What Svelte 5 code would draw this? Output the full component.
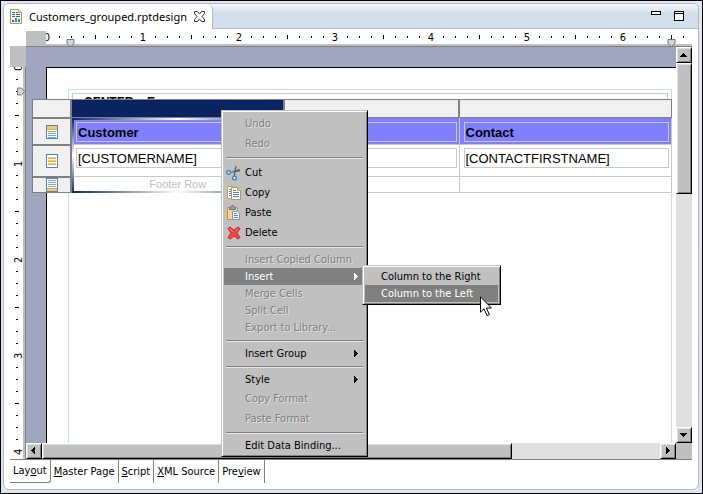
<script>
  let scaleWidth = $state(0);
  let scaleHeight = $state(0);

  // Eight ticks of 12px make one inch.
  const ticks = (length) =>
    Array.from({ length: Math.floor(length / 12) }, (_, i) => ({
      label: i % 8 === 0 ? String(i / 8) : '',
      half: i % 8 === 4
    }));

  const across = $derived(ticks(scaleWidth));
  const down = $derived(ticks(scaleHeight));

  const menu = [
    { text: 'Undo', off: true, tall: true },
    { text: 'Redo', off: true, tall: true },
    null,
    { text: 'Cut', icon: 'cut', tall: true },
    { text: 'Copy', icon: 'copy', tall: true },
    { text: 'Paste', icon: 'paste', tall: true },
    { text: 'Delete', icon: 'delete', tall: true },
    null,
    { text: 'Insert Copied Column', off: true },
    { text: 'Insert', sub: true, active: true },
    { text: 'Merge Cells', off: true },
    { text: 'Split Cell', off: true },
    { text: 'Export to Library...', off: true },
    null,
    { text: 'Insert Group', sub: true },
    null,
    { text: 'Style', sub: true },
    { text: 'Copy Format', off: true, tall: true },
    { text: 'Paste Format', off: true, tall: true },
    null,
    { text: 'Edit Data Binding...' }
  ];

  const views = [
    ['Lay', 'o', 'ut'],
    ['', 'M', 'aster Page'],
    ['', 'S', 'cript'],
    ['', 'X', 'ML Source'],
    ['Pre', 'v', 'iew']
  ];
  let view = $state(0);
</script>

{#snippet arrow(d)}
  <svg width="8" height="8" viewBox="0 0 8 8" shape-rendering="crispEdges" aria-hidden="true"><path {d} /></svg>
{/snippet}

{#snippet rowIcon(kind)}
  <svg width="12" height="14" viewBox="0 0 12 14" shape-rendering="crispEdges" aria-hidden="true">
    <rect x="0.5" y="0.5" width="11" height="13" fill="#fff" stroke="#4a87c4" />
    {#if kind === 'header'}
      <path d="M1 1h10v3H1z" fill="#ffc864" /><path d="M1 4.5h10" stroke="#e8a030" />
      <path d="M2 6.500h8M2 8.500h8M2 10.500h8M2 12.500h8" stroke="#7ca8cc" />
    {:else if kind === 'detail'}
      <path d="M2 3h8v2H2zM2 6h8v2H2zM2 9h8v2H2z" fill="#ffc864" />
      <path d="M2 4.500h8M2 7.500h8M2 10.500h8" stroke="#f0a838" />
    {:else}
      <path d="M2 2.500h8M2 4.500h8M2 6.500h8M2 8.500h8" stroke="#7ca8cc" />
      <path d="M1 10h10v3H1z" fill="#ffc864" /><path d="M1 10.500h10" stroke="#e8a030" />
    {/if}
  </svg>
{/snippet}

{#snippet menuIcon(name)}
  <svg width="16" height="16" viewBox="0 0 16 16" aria-hidden="true">
    {#if name === 'cut'}
      <path d="M10 1L8.500 8.500M9 8l-1 3M13.500 4.500L5 7.500M8.500 6.500L14 5.500" fill="none" stroke="#51677c" stroke-width="1.300" />
      <circle cx="2.500" cy="7.500" r="1.800" fill="#d6e8f8" stroke="#2f78b7" stroke-width="1.200" />
      <circle cx="8.500" cy="13" r="1.900" fill="#d6e8f8" stroke="#2f78b7" stroke-width="1.200" />
    {:else if name === 'copy'}
      <path d="M1.500 1.500h5l2 2v10h-7z" fill="#fff" stroke="#c8a24c" />
      <path d="M3 4.500h2M3 6.500h2M3 8.500h2M3 10.500h2" stroke="#5580b8" />
      <path d="M5.500 2.500h6l3 3v9h-9z" fill="#fff" stroke="#a89a60" />
      <path d="M11.500 2.500v3h3" fill="#f4dc94" stroke="#c8a24c" />
      <path d="M7 5.500h3M7 7.500h6M7 9.500h6M7 11.500h6" stroke="#5580b8" />
    {:else if name === 'paste'}
      <path d="M1.500 2.500h10v12h-10z" fill="#fbd692" stroke="#c89040" />
      <path d="M3.500 4.500v-1.500l1.500-1 1-1.500h1l1 1.500 1.500 1v1.500z" fill="#8fa0b4" stroke="#60748c" />
      <path d="M6.500 6.500h5l2 2v6h-7z" fill="#fff" stroke="#7c94b4" />
      <path d="M8 8.500h3M8 10.500h4M8 12.500h4" stroke="#5580b8" />
    {:else}
      <path d="M2 3.500L4 2l4 3 4-3 2 1.500L11 8l3 4.500L12 14l-4-3-4 3-2-1.500L5 8z" fill="#ee4448" stroke="#c82838" />
      <path d="M4 4l3 3M12 4l-2 2" stroke="#ff9890" fill="none" />
    {/if}
  </svg>
{/snippet}

<main class="window">
  <section class="editor">
    <header class="tabs">
      <div class="tab">
        <svg class="file" width="12" height="15" viewBox="0 0 12 15" aria-hidden="true">
          <path d="M.5.5h8l3 3v11H.5z" fill="#f8fbff" stroke="#b09858" />
          <path d="M8.500.5v3h3" fill="#f6dc9c" stroke="#c8a050" />
          <path d="M2 3.500h3M6 3.500h2M2 5.500h3M6 5.500h4M2 7.500h3M6 7.500h4" stroke="#28649c" />
          <path d="M2 11h2v2H2z" fill="#e82020" /><path d="M5 9h2v4H5z" fill="#2090e0" /><path d="M8 10h2v3H8z" fill="#20a050" />
        </svg>
        <h1>Customers_grouped.rptdesign</h1>
        <button class="close" aria-label="Close">
          <svg width="11" height="11" viewBox="0 0 11 11" aria-hidden="true">
            <path d="M.5.5h3l2 2.500 2-2.500h3v2L8 5.500l2.500 3v2h-3l-2-2.500-2 2.500h-3v-2L3 5.500.5 2.500z" fill="#fff" stroke="#333" />
          </svg>
        </button>
      </div>
      <div class="winbtns">
        <button aria-label="Minimize"><svg width="10" height="10" viewBox="0 0 10 10" shape-rendering="crispEdges"><path d="M.5.5h9v3h-9z" fill="#fff" stroke="#000" /></svg></button>
        <button aria-label="Maximize"><svg width="10" height="10" viewBox="0 0 10 10" shape-rendering="crispEdges"><path d="M.5.5h9v9h-9zM0 2.500h10" fill="#fff" stroke="#000" /></svg></button>
      </div>
    </header>

    <div class="work">
      <div class="hruler">
        <div class="cap"></div>
        <div class="scale" bind:clientWidth={scaleWidth}>
          {#each across as t}
            <span class="tick" class:half={t.half} class:num={t.label}>{t.label}</span>
          {/each}
        </div>
        <svg class="mark start" width="9" height="8" viewBox="0 0 9 8" aria-hidden="true"><path d="M1 .5h7v4l-3.500 3-3.500-3z" fill="#d4d4d4" stroke="#777" /></svg>
        <svg class="mark end" width="9" height="8" viewBox="0 0 9 8" aria-hidden="true"><path d="M1 .5h7v4l-3.500 3-3.500-3z" fill="#d4d4d4" stroke="#777" /></svg>
      </div>

      <div class="vruler">
        <div class="cap"></div>
        <div class="scale" bind:clientHeight={scaleHeight}>
          {#each down as t}
            <span class="tick" class:half={t.half} class:num={t.label}>{t.label}</span>
          {/each}
        </div>
        <svg class="mark" width="8" height="9" viewBox="0 0 8 9" aria-hidden="true"><path d="M.5 1h4l3 3.500-3 3.500h-4z" fill="#d4d4d4" stroke="#777" /></svg>
      </div>

      <div class="canvas">
        <div class="page">
          <div class="margin"><div class="label">CENTER = E</div></div>
        </div>

        <table class="grid">
          <colgroup><col class="c0" /><col /><col class="c2" /><col /></colgroup>
          <thead>
            <tr class="cols"><td></td><td class="picked"></td><td></td><td></td></tr>
          </thead>
          <tbody>
            <tr class="head">
              <td class="handle">{@render rowIcon('header')}</td>
              <th><div class="box">Customer</div><div class="selection"></div></th>
              <th><div class="box"></div></th>
              <th><div class="box">Contact</div></th>
            </tr>
            <tr class="detail">
              <td class="handle">{@render rowIcon('detail')}</td>
              <td><div class="box">[CUSTOMERNAME]</div></td>
              <td><div class="box"></div></td>
              <td><div class="box">[CONTACTFIRSTNAME]</div></td>
            </tr>
            <tr class="foot">
              <td class="handle">{@render rowIcon('footer')}</td>
              <td class="hint">Footer Row</td><td></td><td></td>
            </tr>
          </tbody>
        </table>
      </div>

      <div class="vbar">
        <button aria-label="Scroll up">{@render arrow('M3 2h1v1h1v1h1v1h1v1H0V5h1V4h1V3h1z')}</button>
        <div class="track"><div class="thumb"></div></div>
        <button aria-label="Scroll down">{@render arrow('M0 2h7v1H6v1H5v1H4v1H3V5H2V4H1V3H0z')}</button>
      </div>
      <div class="hbar">
        <button aria-label="Scroll left">{@render arrow('M5 0v7H4V6H3V5H2V4H1V3h1V2h1V1h1V0z')}</button>
        <div class="track"><div class="thumb"></div></div>
        <button aria-label="Scroll right">{@render arrow('M2 0h1v1h1v1h1v1h1v1H5v1H4v1H3v1H2z')}</button>
      </div>
      <div class="corner"></div>
    </div>

    <nav class="views">
      {#each views as [a, key, b], i}
        <button class:on={view === i} onclick={() => (view = i)}>{a}<u>{key}</u>{b}</button>
      {/each}
    </nav>
  </section>

  <div class="menu context" role="menu">
    {#each menu as item}
      {#if item}
        <button role="menuitem" disabled={item.off} class:tall={item.tall} class:active={item.active}>
          <span class="icon">{#if item.icon}{@render menuIcon(item.icon)}{/if}</span>
          <span class="text">{item.text}</span>
          {#if item.sub}{@render arrow('M2 0h1v1h1v1h1v1h1v1H5v1H4v1H3v1H2z')}{/if}
        </button>
      {:else}
        <hr />
      {/if}
    {/each}
  </div>

  <div class="menu submenu" role="menu">
    <button role="menuitem"><span class="text">Column to the Right</span></button>
    <button role="menuitem" class="active"><span class="text">Column to the Left</span></button>
  </div>

  <svg class="pointer" width="12" height="21" viewBox="0 0 12 21" aria-hidden="true">
    <path d="M.5.8v15.400l3.500-3.400 3 6.800 2.400-1-3-6.600h5z" fill="#fff" stroke="#000" />
  </svg>
</main>

<style>
  :global(body) { margin: 0; }
  * { box-sizing: border-box; }
  button { font: inherit; color: inherit; margin: 0; padding: 0; border: 0; background: none; }
  svg { display: block; flex: none; }

  .window {
    position: relative;
    display: flex;
    min-height: 100vh;
    padding: 2px 3px 3px 2px;
    border: 1px solid #000;
    background: linear-gradient(#e6e4f4, #dfe6ee);
    font: 11px/16px "DejaVu Sans Condensed", "DejaVu Sans", sans-serif;
    color: #000;
  }
  .editor {
    flex: 1;
    min-width: 0;
    display: flex;
    flex-direction: column;
    border: 1px solid #b4b8c4;
    border-radius: 6px;
    background: #fff;
    overflow: hidden;
  }

  .tabs {
    display: flex;
    justify-content: space-between;
    height: 25px;
    border-bottom: 1px solid #b0bcc8;
    background: linear-gradient(#f4f8fc, #d1deea 40%, #d4e1ee);
  }
  .tab {
    display: flex;
    align-items: center;
    gap: 7px;
    height: 25px;
    padding: 0 7px 0 6px;
    border-right: 1px solid #b0bcc8;
    border-radius: 0 6px 0 0;
    background: #fff;
  }
  h1 { margin: 0; font: 11px/16px "Noto Sans", sans-serif; }
  .winbtns { display: flex; gap: 13px; padding: 7px 14px 0 0; align-items: flex-start; }

  .work {
    flex: 1;
    display: grid;
    grid-template: 16px minmax(380px, 1fr) 16px / 16px minmax(0, 1fr) 16px;
    margin: 2px 6px 0;
  }
  .hruler {
    grid-area: 1 / 2 / 2 / 4;
    position: relative;
    display: flex;
    min-width: 0;
    overflow: hidden;
    border-bottom: 1px solid #808080;
    box-shadow: inset 0 -2px #c0c0c0;
  }
  .vruler {
    grid-area: 1 / 1 / 4 / 2;
    position: relative;
    display: flex;
    flex-direction: column;
    height: 0;
    min-height: 100%;
    padding-top: 15px;
    overflow: hidden;
  }
  .cap { flex: none; z-index: 1; background: #c0c0c0; }
  .hruler .cap { width: 20px; }
  .vruler .cap { height: 21px; }
  .scale { display: flex; flex: 1; min-width: 0; min-height: 0; overflow: hidden; }
  .hruler .scale { margin-left: -5px; height: 13px; }
  .vruler .scale { flex-direction: column; margin-top: -5px; padding-left: 2px; border-right: 1px solid #808080; box-shadow: inset -2px 0 #c0c0c0; }
  .tick {
    flex: none;
    width: 12px;
    height: 12px;
    background: linear-gradient(#000, #000) center / 1px 2px no-repeat;
    text-align: center;
    line-height: 13px;
  }
  .hruler .half { background-size: 1px 4px; }
  .vruler .tick { background: linear-gradient(#000, #000) 6px center / 2px 1px no-repeat; writing-mode: vertical-rl; transform: rotate(180deg); }
  .vruler .half { background-size: 4px 1px; background-position-x: 5px; }
  .hruler .num, .vruler .num { background: none; }
  .mark { position: absolute; }
  .start { left: 40px; top: 8px; }
  .end { right: 16px; top: 8px; }
  .vruler .mark { left: 7px; top: 56px; }

  .canvas {
    grid-area: 2 / 2 / 3 / 3;
    position: relative;
    display: flex;
    padding: 20px 0 0 20px;
    background: #a0a6c0;
  }
  .page { flex: 1; padding: 21px 4px 0 21px; border: solid #000; border-width: 1px 0 0 1px; background: #fff; }
  .margin { height: 100%; padding: 3px; border: 1px solid #cadcec; border-bottom: 0; }
  .label { height: 24px; padding: 0 11px; border: 1px solid #c8c8c8; font: bold 12px/16px "Liberation Sans", Arial, sans-serif; }

  .grid {
    position: absolute;
    left: 6px;
    top: 52px;
    width: calc(100% - 10px);
    table-layout: fixed;
    border-collapse: separate;
    border-spacing: 0;
    font: 13px/16px "Liberation Sans", Arial, sans-serif;
    background: #fff;
  }
  .c0 { width: 40px; }
  .c2 { width: 175px; }
  .grid td, .grid th { padding: 0; text-align: left; vertical-align: top; border: solid #c8c8c8; border-width: 0 1px 1px 0; }
  .grid .cols td { height: 19px; background: #f0f0f0; border: solid #808080; border-width: 1px 1px 1px 0; }
  .grid .cols td:first-child { border-left-width: 1px; }
  .grid .cols td:nth-child(-n + 3) { border-right-width: 2px; }
  .grid .cols .picked { background: #0a2463; }
  .grid .handle { background: #f0f0f0; border: solid #808080; border-width: 1px 2px 1px 1px; vertical-align: middle; }
  .handle svg { margin: 0 auto; }
  .head { height: 27px; }
  .head th { position: relative; background: #8080ff; }
  .detail { height: 32px; }
  .foot { height: 16px; }
  .box { height: 20px; margin: 4px 2px 0 4px; padding: 2px 1px 0; border: 1px solid #c8c8c8; }
  .detail .box { margin-top: 3px; }
  .grid .hint { font-size: 11px; line-height: 15px; text-align: center; color: #c0c0c0; }
  .selection {
    position: absolute;
    left: 0;
    top: 0;
    width: 100%;
    height: 75px;
    pointer-events: none;
    background:
      linear-gradient(90deg, #0a2463, #fff, #0a2463) top / 100% 2px no-repeat,
      linear-gradient(90deg, #0a2463, #fff, #0a2463) bottom / 100% 2px no-repeat,
      linear-gradient(#0a2463, #fff, #0a2463) left / 2px 100% no-repeat,
      linear-gradient(#0a2463, #fff, #0a2463) right / 2px 100% no-repeat;
  }

  .vbar { grid-area: 2 / 3 / 3 / 4; display: flex; flex-direction: column; }
  .hbar { grid-area: 3 / 2 / 4 / 3; display: flex; }
  .corner { grid-area: 3 / 3 / 4 / 4; background: #c0c0c0; }
  .track { flex: 1; display: flex; background: #e0e0e0; }
  .vbar button, .hbar button, .thumb {
    background: #c0c0c0;
    border: 1px solid;
    border-color: #fff #000 #000 #fff;
    box-shadow: inset 1px 1px #e0e0e0, inset -1px -1px #808080;
  }
  .vbar button, .hbar button { width: 16px; height: 16px; display: flex; align-items: center; justify-content: center; }
  .vbar .thumb { width: 100%; height: 36%; }
  .hbar .thumb { width: 76%; }

  .views { display: flex; height: 30px; margin: 0 6px; border-top: 1px solid #808080; align-items: flex-start; }
  .views button { height: 23px; padding: 0 3px; border-right: 1px solid #808080; white-space: nowrap; }
  .views .on { border-bottom: 1px solid #808080; border-radius: 0 0 3px 0; }

  .menu {
    position: absolute;
    z-index: 1;
    display: flex;
    flex-direction: column;
    padding: 2px;
    border: 1px solid;
    border-color: #c0c0c0 #000 #000 #c0c0c0;
    box-shadow: inset 1px 1px #fff, inset -1px -1px #808080;
    background: #c0c0c0;
  }
  .context { left: 220px; top: 109px; width: 147px; }
  .submenu { left: 361px; top: 264px; width: 139px; }
  .menu button { display: flex; align-items: center; height: 17px; padding-right: 5px; text-align: left; white-space: nowrap; }
  .menu .tall { height: 20px; padding-top: 2px; }
  .menu .active { background: #808080; color: #fff; }
  .menu button:disabled { color: #808080; text-shadow: 1px 1px #e0e0e0; }
  .icon { flex: none; width: 21px; padding-left: 2px; }
  .text { flex: 1; }
  .submenu .text { padding-left: 16px; }
  .menu svg { fill: currentColor; }
  hr { width: calc(100% - 4px); height: 9px; margin: 0 2px; border: 0; background: linear-gradient(#808080 50%, #e8e8e8 50%) center / 100% 2px no-repeat; }
  .pointer { position: absolute; z-index: 1; left: 479px; top: 295px; }
</style>
